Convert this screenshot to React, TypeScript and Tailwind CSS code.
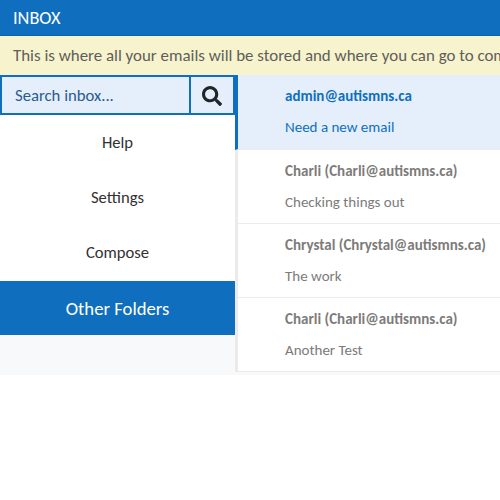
const font = "font-[Calibri,Carlito,Lato,sans-serif]";

type Mail = { from: string; subject: string; active?: boolean };

const mails: Mail[] = [
  { from: "admin@autismns.ca", subject: "Need a new email", active: true },
  { from: "Charli (Charli@autismns.ca)", subject: "Checking things out" },
  { from: "Chrystal (Chrystal@autismns.ca)", subject: "The work" },
  { from: "Charli (Charli@autismns.ca)", subject: "Another Test" },
];

function SearchIcon() {
  return (
    <svg viewBox="0 0 512 512" className="h-5 w-5" fill="#212529" aria-hidden="true">
      <path d="M505 442.7L405.3 343c-4.5-4.5-10.6-7-17-7H372c27.600-35.300 44-79.700 44-128C416 93.100 322.900 0 208 0S0 93.100 0 208s93.100 208 208 208c48.300 0 92.700-16.400 128-44v16.300c0 6.400 2.500 12.500 7 17l99.700 99.700c9.400 9.400 24.600 9.400 33.900 0l28.300-28.300c9.400-9.400 9.400-24.600.1-34zM208 336c-70.700 0-128-57.200-128-128 0-70.700 57.200-128 128-128 70.700 0 128 57.200 128 128 0 70.700-57.200 128-128 128z" />
    </svg>
  );
}

export default function App() {
  return (
    <div className={`${font} h-[500px] w-[500px] overflow-hidden bg-white`}>
      <header className="flex h-9 items-center border-b border-[#0a62b4] bg-[#106ebe] pt-[3px] pl-[13px] text-[18.3px] text-white">
        <span>INBOX</span>
      </header>
      <div className="h-[39px] overflow-hidden bg-[#f7f3cd] pl-[13px] text-[16.9px] leading-[39px] whitespace-nowrap text-[#605e5c]">
        This is where all your emails will be stored and where you can go to compose
      </div>
      <div className="flex h-[300px] bg-[#f8f9fb]">
        <aside className="w-[235px] shrink-0">
          <div className="flex h-10 border-2 border-[#106ebe] bg-[#e4effb]">
            <div className="flex w-[189px] items-center border-r-2 border-[#106ebe] pt-px pl-[13px] text-[16.7px] text-[#2b5c90]">
              Search inbox...
            </div>
            <div className="flex flex-1 items-center justify-center pt-px pr-px">
              <SearchIcon />
            </div>
          </div>
          <nav className="grid h-[166px] grid-rows-3 bg-white pb-px text-center text-[16.6px] text-[#323130]">
            <span className="self-center">Help</span>
            <span className="self-center">Settings</span>
            <span className="self-center">Compose</span>
          </nav>
          <div className="flex h-[54px] items-center justify-center bg-[#106ebe] pt-[3px] text-[18.7px] text-white">
            Other Folders
          </div>
        </aside>
        <main className="min-w-0 flex-1">
          {mails.map((m, i) => (
            <div
              key={i}
              className={`flex h-[74px] flex-col border-b border-l-3 border-b-[#edebe9] pt-[11px] pl-[47px] text-[15px] leading-5 whitespace-nowrap first:h-[75px] ${
                m.active ? "border-l-[#106ebe] bg-[#e4effb] text-[#106ebe]" : "border-l-[#edebe9] bg-white text-[#7d7b79]"
              }`}
            >
              <span className="font-bold">{m.from}</span>
              <span className="mt-[11px]">{m.subject}</span>
            </div>
          ))}
        </main>
      </div>
    </div>
  );
}
